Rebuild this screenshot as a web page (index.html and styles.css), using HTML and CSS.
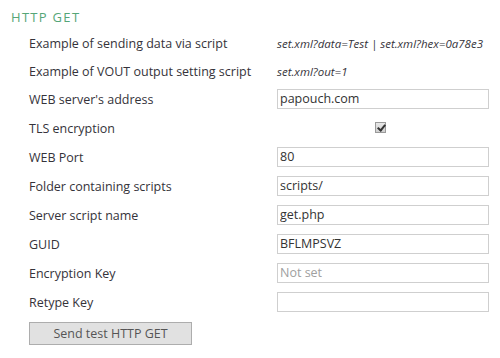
FILE: index.html
```html
<!DOCTYPE html>
<html lang="en">
    <head>
        <meta charset="utf-8"/>
        <meta name="viewport" content="width=device-width, initial-scale=1">
        <title>HTTP GET</title>
        <link rel="stylesheet" href="styles.css">
    </head>
    <body>
        <section class="settings">
            <h2 class="settings-title">HTTP GET</h2>
            <div class="settings-grid">
                <div class="label">Example of sending data via script</div>
                <div class="example">set.xml?data=Test | set.xml?hex=0a78e3</div>

                <div class="label">Example of VOUT output setting script</div>
                <div class="example">set.xml?out=1</div>

                <label class="label" for="server">WEB server's address</label>
                <input class="field" id="server" type="text" value="papouch.com">

                <label class="label" for="tls">TLS encryption</label>
                <div class="check-cell"><input class="check" id="tls" type="checkbox" checked></div>

                <label class="label" for="port">WEB Port</label>
                <input class="field" id="port" type="text" value="80">

                <label class="label" for="folder">Folder containing scripts</label>
                <input class="field" id="folder" type="text" value="scripts/">

                <label class="label" for="script">Server script name</label>
                <input class="field" id="script" type="text" value="get.php">

                <label class="label" for="guid">GUID</label>
                <input class="field" id="guid" type="text" value="BFLMPSVZ">

                <label class="label" for="key">Encryption Key</label>
                <input class="field" id="key" type="text" placeholder="Not set">

                <label class="label" for="key2">Retype Key</label>
                <input class="field" id="key2" type="text">
            </div>
            <button class="send-btn" type="button">Send test HTTP GET</button>
        </section>
    </body>
</html>
```

FILE: styles.css
```css
html, body {
    margin: 0;
    padding: 0;
    background: #fff;
    font-family: "Open Sans", sans-serif;
    color: #35333a;
}

.settings {
    padding: 8px 0 0 11px;
}

.settings-title {
    margin: 0 0 2px 0;
    font-size: 13px;
    line-height: 18px;
    font-weight: 400;
    letter-spacing: 1.3px;
    color: #55a678;
}

.settings-grid {
    display: grid;
    grid-template-columns: 248px 212px;
    grid-template-rows: 28px 28px;
    grid-auto-rows: 29px;
    align-items: center;
    padding-left: 18px;
}

.label {
    padding-top: 2px;
    font-size: 12.5px;
    white-space: nowrap;
}

.example {
    padding-top: 2px;
    font-size: 11.5px;
    font-style: italic;
    white-space: nowrap;
}

.field {
    box-sizing: border-box;
    width: 212px;
    height: 20px;
    margin: 0;
    padding: 0 2px;
    border: 1px solid #cfcfcf;
    font-family: "Open Sans", sans-serif;
    font-size: 12.5px;
    color: #333;
    outline: none;
}

.field::placeholder {
    color: #a0a0a0;
}

.check-cell {
    display: flex;
}

.check {
    appearance: none;
    position: relative;
    width: 11px;
    height: 11px;
    margin: 0 0 0 98px;
    border: 1px solid #9a9a9a;
    background: linear-gradient(#e8e8e8, #cfcfcf);
}

.check:checked::after {
    content: "";
    position: absolute;
    left: 3px;
    top: 0px;
    width: 3px;
    height: 6px;
    border: solid #333;
    border-width: 0 2px 2px 0;
    transform: rotate(40deg);
}

.send-btn {
    box-sizing: border-box;
    margin: 6px 0 0 18px;
    width: 163px;
    height: 23px;
    background: #e1e1e1;
    border: 1px solid #adadad;
    border-radius: 0;
    font-family: "Open Sans", sans-serif;
    font-size: 12.5px;
    color: #555;
}
```
